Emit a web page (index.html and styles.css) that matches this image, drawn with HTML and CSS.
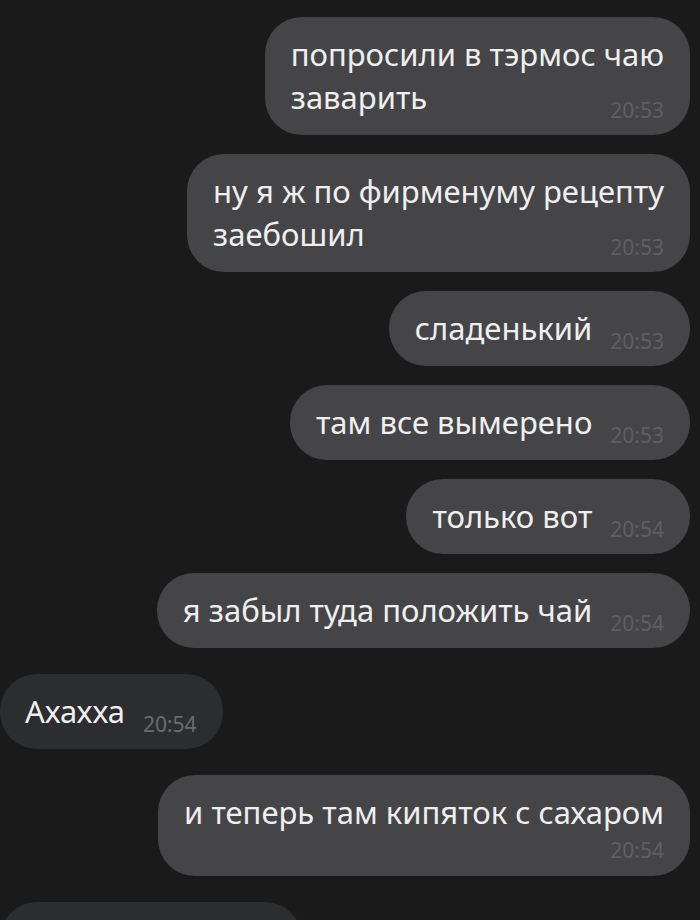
FILE: index.html
```html
<!DOCTYPE html>
<html>
<head>
    <meta charset="utf-8">
    <title>Chat</title>
    <link rel="stylesheet" href="styles.css">
</head>
<body>
    <div class="chat">
        <div class="row out">
            <div class="bubble">попросили в тэрмос чаю<br>заварить<span class="time">20:53</span></div>
        </div>
        <div class="row out">
            <div class="bubble">ну я ж по фирменуму рецепту<br>заебошил<span class="time">20:53</span></div>
        </div>
        <div class="row out">
            <div class="bubble">сладенький<span class="time">20:53</span></div>
        </div>
        <div class="row out">
            <div class="bubble">там все вымерено<span class="time">20:53</span></div>
        </div>
        <div class="row out">
            <div class="bubble">только вот<span class="time">20:54</span></div>
        </div>
        <div class="row out">
            <div class="bubble">я забыл туда положить чай<span class="time">20:54</span></div>
        </div>
        <div class="row in new-group">
            <div class="bubble">Ахахха<span class="time">20:54</span></div>
        </div>
        <div class="row out new-group">
            <div class="bubble wrapped">и теперь там кипяток с сахаром<span class="time">20:54</span></div>
        </div>
        <div class="row in new-group">
            <div class="bubble bubble-cut"></div>
        </div>
    </div>
</body>
</html>
```

FILE: styles.css
```css
/* Dark chat screen */
body {
    margin: 0;
    background-color: #1a1a1a;
    font-family: "Noto Sans", "Open Sans", sans-serif;
    color: #efeff0;
    overflow: hidden;
}
.chat {
    display: flex;
    flex-direction: column;
    gap: 19px;
    padding: 17px 10px 0 0;
}
.row {
    display: flex;
}
.row.out {
    justify-content: flex-end;
}
.row.in {
    justify-content: flex-start;
}
.new-group {
    margin-top: 7px;
}
.bubble {
    background-color: #454547;
    border-radius: 37px;
    padding: 16px 26px;
    font-size: 31px;
    line-height: 43px;
    max-width: 500px;
}
.in .bubble {
    background-color: #2c2d2f;
    padding-left: 25px;
}
/* time sits on the last line, pushed to the right */
.time {
    float: right;
    margin: 25px 0 0 18px;
    font-size: 21px;
    line-height: 18px;
    color: #5f5f62;
}
.in .time {
    color: #6b6b6d;
}
.wrapped .time {
    float: none;
    display: block;
    text-align: right;
    margin: 6px 0 0 0;
    line-height: 20px;
}
.bubble-cut {
    width: 251px;
    height: 43px;
}
```
